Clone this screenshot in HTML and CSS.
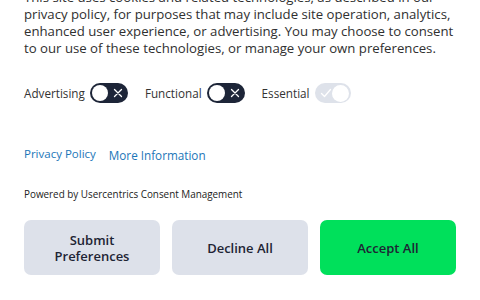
FILE: index.html
```html
<!DOCTYPE html>
<html lang="en">
<head>
    <meta charset="UTF-8">
    <meta name="viewport" content="width=device-width, initial-scale=1.0">
    <title>Privacy Settings</title>
    <link rel="stylesheet" href="styles.css">
</head>
<body>
    <div class="banner">
        <p class="message">This site uses cookies and related technologies, as described in our privacy policy, for purposes that may include site operation, analytics, enhanced user experience, or advertising. You may choose to consent to our use of these technologies, or manage your own preferences.</p>

        <div class="toggles">
            <label class="toggle-item">
                <span>Advertising</span>
                <span class="switch">
                    <span class="knob"></span>
                    <svg class="mark" width="10" height="10" viewBox="0 0 10 10"><path d="M1.5 1.5l7 7M8.5 1.5l-7 7" stroke="#fff" stroke-width="1.3" stroke-linecap="round"/></svg>
                </span>
            </label>
            <label class="toggle-item">
                <span>Functional</span>
                <span class="switch">
                    <span class="knob"></span>
                    <svg class="mark" width="10" height="10" viewBox="0 0 10 10"><path d="M1.5 1.5l7 7M8.5 1.5l-7 7" stroke="#fff" stroke-width="1.3" stroke-linecap="round"/></svg>
                </span>
            </label>
            <label class="toggle-item">
                <span>Essential</span>
                <span class="switch switch-on">
                    <svg class="mark" width="12" height="10" viewBox="0 0 12 10"><path d="M1.5 5.5l3 3 6-7" fill="none" stroke="#fff" stroke-width="1.3" stroke-linecap="round" stroke-linejoin="round"/></svg>
                    <span class="knob"></span>
                </span>
            </label>
        </div>

        <div class="links">
            <a href="#" class="link-policy">Privacy Policy</a>
            <a href="#" class="link-more">More Information</a>
        </div>

        <p class="powered">Powered by Usercentrics Consent Management</p>

        <div class="buttons">
            <button class="btn">Submit<br>Preferences</button>
            <button class="btn">Decline All</button>
            <button class="btn btn-accept">Accept All</button>
        </div>
    </div>
</body>
</html>
```

FILE: styles.css
```css
body {
    margin: 0;
    padding: 0;
    background-color: #fff;
    font-family: "Open Sans", "Noto Sans", Arial, sans-serif;
    color: #333;
    overflow: hidden;
}

.banner {
    padding: 0 24px;
    margin-top: -11px;
}

.message {
    margin: 0;
    font-size: 13.2px;
    line-height: 17px;
    color: #303030;
}

.toggles {
    display: flex;
    align-items: center;
    gap: 17px;
    margin-top: 26px;
    font-size: 11.7px;
}

.toggle-item {
    display: flex;
    align-items: center;
    gap: 5px;
}

.switch {
    display: flex;
    align-items: center;
    justify-content: space-between;
    width: 38px;
    height: 20px;
    padding: 0 5px 0 2px;
    box-sizing: border-box;
    border-radius: 10px;
    background-color: #1d2538;
}

.knob {
    width: 16px;
    height: 16px;
    border-radius: 50%;
    background-color: #fff;
}

.switch-on {
    width: 36px;
    background-color: #dee2ea;
    padding: 0 2px 0 5px;
}

.switch-on .knob {
    width: 17px;
    height: 17px;
}

.links {
    display: flex;
    align-items: flex-end;
    gap: 13px;
    margin-top: 42px;
}

.links a {
    color: #1b76b8;
    text-decoration: none;
}

.link-policy {
    font-size: 11.5px;
}

.link-more {
    font-size: 11.7px;
    position: relative;
    top: 2px;
}

.powered {
    margin: 26px 0 0;
    font-size: 9.9px;
    color: #222;
}

.buttons {
    display: flex;
    gap: 12px;
    margin-top: 19px;
}

.btn {
    flex: 1;
    height: 55px;
    border: none;
    border-radius: 7px;
    background-color: #dde1ea;
    color: #1e2434;
    font-family: "Open Sans", "Noto Sans", Arial, sans-serif;
    font-size: 13px;
    font-weight: 600;
    line-height: 16px;
    cursor: pointer;
}

.btn-accept {
    background-color: #00e05b;
}
```
